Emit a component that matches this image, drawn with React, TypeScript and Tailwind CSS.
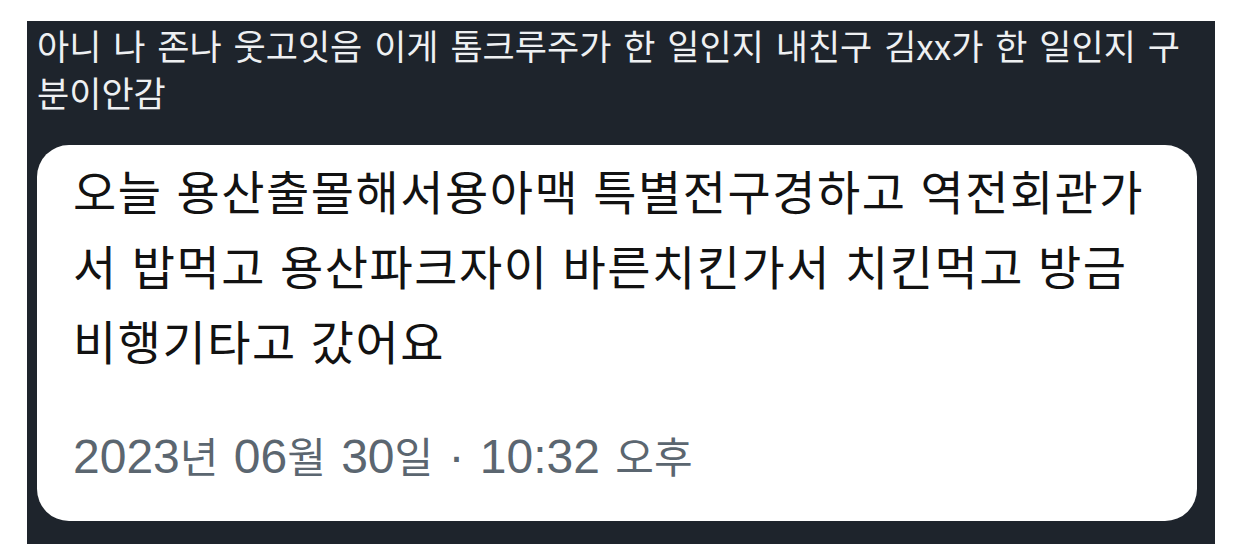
import React from 'react';

const kr = { fontFamily: '"Noto Sans CJK KR", "Noto Sans", sans-serif' };

export default function App() {
  const caption = ['아니 나 존나 웃고잇음 이게 톰크루주가 한 일인지 내친구 김xx가 한 일인지 구', '분이안감'];
  const body = [
    '오늘 용산출몰해서용아맥 특별전구경하고 역전회관가',
    '서 밥먹고 용산파크자이 바른치킨가서 치킨먹고 방금',
    '비행기타고 갔어요',
  ];

  return (
    <div className="min-h-screen w-full bg-white pt-[24px] pl-[27px]">
      <div className="w-[1188px] bg-[#1e242c] pl-[10px] pr-[18px] pb-[23px]">
        <div className="mt-[-3px] text-[35px] leading-[47px] text-[#eef0f2] [word-spacing:4px]" style={kr}>
          {caption.map(line => (
            <div key={line} className="whitespace-nowrap">{line}</div>
          ))}
        </div>

        <div className="mt-[30px] rounded-[32px] bg-white pl-[36px] pt-[7px] pb-[38px]">
          <div className="text-[47px] leading-[75px] tracking-[1.5px] text-[#121212] [word-spacing:2px]" style={kr}>
            {body.map(line => (
              <div key={line} className="whitespace-nowrap">{line}</div>
            ))}
          </div>
          <div
            className="mt-[56px] whitespace-nowrap text-[48px] leading-[48px] text-[#5b6670] [word-spacing:2px]"
            style={{ fontFamily: '"Liberation Sans", "Noto Sans CJK KR", sans-serif' }}
          >
            2023<span className="text-[42px]">년</span> 06<span className="text-[42px]">월</span> 30
            <span className="text-[42px]">일</span> · 10:32 <span className="text-[42px]">오후</span>
          </div>
        </div>
      </div>
    </div>
  );
}
